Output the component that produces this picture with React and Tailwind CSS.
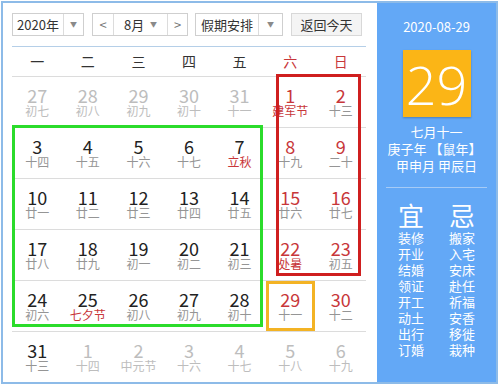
const weekdays = ["一", "二", "三", "四", "五", "六", "日"];

// t: 0 other month, 1 current month; f: festival (red lunar)
const weeks = [
  [
    ["27", "初七", 0], ["28", "初八", 0], ["29", "初九", 0], ["30", "初十", 0], ["31", "十一", 0],
    ["1", "建军节", 1, true], ["2", "十三", 1],
  ],
  [
    ["3", "十四", 1], ["4", "十五", 1], ["5", "十六", 1], ["6", "十七", 1], ["7", "立秋", 1, true],
    ["8", "十九", 1], ["9", "二十", 1],
  ],
  [
    ["10", "廿一", 1], ["11", "廿二", 1], ["12", "廿三", 1], ["13", "廿四", 1], ["14", "廿五", 1],
    ["15", "廿六", 1], ["16", "廿七", 1],
  ],
  [
    ["17", "廿八", 1], ["18", "廿九", 1], ["19", "初一", 1], ["20", "初二", 1], ["21", "初三", 1],
    ["22", "处暑", 1, true], ["23", "初五", 1],
  ],
  [
    ["24", "初六", 1], ["25", "七夕节", 1, true], ["26", "初八", 1], ["27", "初九", 1], ["28", "初十", 1],
    ["29", "十一", 1], ["30", "十二", 1],
  ],
  [
    ["31", "十三", 1], ["1", "十四", 0], ["2", "中元节", 0], ["3", "十六", 0], ["4", "十七", 0],
    ["5", "十八", 0], ["6", "十九", 0],
  ],
];

const yi = ["装修", "开业", "结婚", "领证", "开工", "动土", "出行", "订婚"];
const ji = ["搬家", "入宅", "安床", "赴任", "祈福", "安香", "移徙", "栽种"];

function Arrow() {
  return <span className="text-[7px] text-[#8a8a8a]">▼</span>;
}

function DayCell({ day, col }) {
  const [num, lunar, cur, fest] = day;
  const weekend = col >= 5;
  let numColor = "text-[#222]";
  if (!cur) numColor = "text-[#bdbdbd]";
  else if (weekend) numColor = "text-[#c8373a]";
  let lunarColor = "text-[#959595]";
  if (!cur) lunarColor = "text-[#bdbdbd]";
  else if (fest) lunarColor = "text-[#c8373a]";

  return (
    <div className="flex flex-col items-center pt-[9px] h-[50px]">
      <span className={`text-[18px] leading-[18px] ${numColor}`}>{num}</span>
      <span className={`text-[12px] leading-[14px] ${lunarColor}`}>{lunar}</span>
    </div>
  );
}

export default function App() {
  return (
    <div className="pl-[1px] pt-[1px]" style={{ fontFamily: '"Noto Sans CJK SC", "Noto Sans", sans-serif' }}>
      <div className="relative w-[497px] h-[383px] border-2 border-[#8dbbe8] flex overflow-hidden bg-white">

        {/* calendar */}
        <div className="w-[374px] pl-[9px] pt-[10px]">

          <div className="flex h-[23px] text-[13px] text-[#333]">
            <div className="flex w-[72px] border border-[#cfcfcf]">
              <span className="w-[51px] flex items-center justify-center border-r border-[#dcdcdc]">2020年</span>
              <span className="flex-1 flex items-center justify-center"><Arrow /></span>
            </div>

            <div className="flex w-[96px] ml-[8px] border border-[#cfcfcf]">
              <span className="w-[21px] flex items-center justify-center border-r border-[#dcdcdc] text-[#777]">&lt;</span>
              <span className="w-[54px] flex items-center justify-between px-[10px] border-r border-[#dcdcdc]">
                8月 <Arrow />
              </span>
              <span className="flex-1 flex items-center justify-center text-[#777]">&gt;</span>
            </div>

            <div className="flex w-[88px] ml-[7px] border border-[#cfcfcf]">
              <span className="w-[63px] flex items-center justify-center border-r border-[#dcdcdc]">假期安排</span>
              <span className="flex-1 flex items-center justify-center"><Arrow /></span>
            </div>

            <div className="w-[71px] ml-[8px] border border-[#d8d8d8] bg-[#f4f4f4] flex items-center justify-center">
              返回今天
            </div>
          </div>

          <div className="w-[354px] mt-[10px] border-t border-[#b5cfe8]" />

          <div className="w-[354px] grid grid-cols-7 h-[30px] items-center border-b border-[#dcdcdc] text-[14px]">
            {weekdays.map((w, i) => (
              <span key={w} className={`text-center ${i >= 5 ? "text-[#c8373a]" : "text-[#333]"}`}>{w}</span>
            ))}
          </div>

          {weeks.map((week, r) => (
            <div key={r} className="w-[354px] grid grid-cols-7 border-b border-[#dcdcdc]">
              {week.map((d, c) => (
                <DayCell key={c} day={d} col={c} />
              ))}
            </div>
          ))}
        </div>

        {/* side panel */}
        <div className="flex-1 bg-[#63a8f6] text-white flex flex-col items-center">
          <div className="mt-[15px] text-[13px] leading-[18px]">2020-08-29</div>
          <div
            className="mt-[14px] w-[68px] h-[67px] bg-[#fbb516] shadow-[0_1px_2px_rgba(0,0,0,0.25)] flex items-center justify-center text-[54px] font-light leading-none"
            style={{ fontFamily: '"Open Sans", "Noto Sans", sans-serif' }}
          >
            29
          </div>
          <div className="mt-[6px] text-[13px] leading-[17px]">七月十一</div>
          <div className="text-[13px] leading-[17px] ml-[-4px]">庚子年 【鼠年】</div>
          <div className="text-[13px] leading-[17px]">甲申月 甲辰日</div>
          <div className="mt-[13px] w-[101px] border-t border-[#a6cbf6]" />
          <div className="mt-[12px] flex gap-[25px] text-[26px] leading-[30px]">
            <span>宜</span>
            <span>忌</span>
          </div>
          <div className="mt-0 flex gap-[25px] text-[13px] leading-[16px]">
            <div className="flex flex-col">
              {yi.map(t => <span key={t}>{t}</span>)}
            </div>
            <div className="flex flex-col">
              {ji.map(t => <span key={t}>{t}</span>)}
            </div>
          </div>
        </div>

        {/* annotation boxes */}
        <div className="absolute left-[9px] top-[122px] w-[251px] h-[202px] border-[3px] border-[#2bdc2b]" />
        <div className="absolute left-[273px] top-[71px] w-[85px] h-[202px] border-[3px] border-[#cf1f1f]" />
        <div className="absolute left-[263px] top-[278px] w-[49px] h-[50px] border-[3px] border-[#f3b324]" />
      </div>
    </div>
  );
}
